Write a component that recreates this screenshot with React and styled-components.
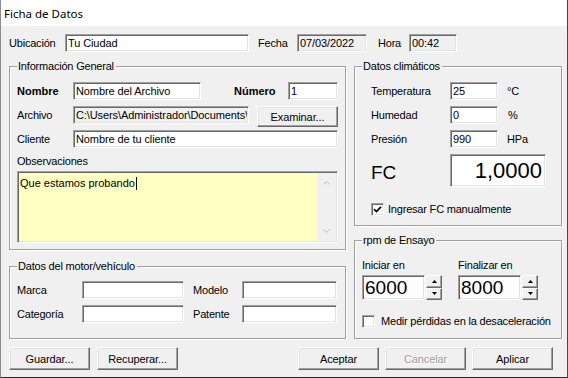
import React from 'react';
import styled, { createGlobalStyle } from 'styled-components';

const GlobalStyle = createGlobalStyle`
  html, body {
    margin: 0;
    padding: 0;
    background: #fff;
  }
  body {
    font-family: "Liberation Sans", Arial, sans-serif;
    font-size: 11px;
    color: #000;
  }
  * {
    box-sizing: border-box;
  }
`;

const Window = styled.div`
  width: 568px;
  height: 378px;
  display: flex;
  flex-direction: column;
  background: #f0f0f0;
  border-left: 1px solid #8c8c8c;
  border-right: 1px solid #4a4a24;
  border-bottom: 1px solid #2b2b2b;
`;

const TitleBar = styled.div`
  flex: none;
  height: 26px;
  display: flex;
  align-items: center;
  padding-left: 3px;
  background: #fff;
  font-family: "Noto Sans", "Liberation Sans", sans-serif;
  font-size: 11.5px;
`;

const Body = styled.div`
  flex: 1;
  display: flex;
  flex-direction: column;
  padding: 7px 6px 0 8px;
`;

const TopRow = styled.div`
  display: flex;
  align-items: center;
  height: 19px;
`;

const Label = styled.span`
  flex: none;
  width: ${(p) => (p.$w ? `${p.$w}px` : 'auto')};
  margin-left: ${(p) => (p.$auto ? 'auto' : `${p.$ml || 0}px`)};
  font-weight: ${(p) => (p.$bold ? 700 : 400)};
  letter-spacing: ${(p) => (p.$bold ? '0' : '-0.2px')};
  white-space: nowrap;
`;

const BigLabel = styled.span`
  flex: none;
  width: ${(p) => p.$w}px;
  font-family: "Liberation Sans", Arial, sans-serif;
  font-size: 19px;
  padding-top: 4px;
`;

const Field = styled.input`
  flex: none;
  width: ${(p) => p.$w}px;
  height: ${(p) => p.$h || 18}px;
  margin: 0;
  margin-left: ${(p) => p.$ml || 0}px;
  padding: 0 ${(p) => (p.$align === 'right' ? 3 : 1)}px 0 2px;
  font-family: "Liberation Sans", Arial, sans-serif;
  font-size: ${(p) => p.$fs || 11}px;
  letter-spacing: ${(p) => (p.$fs ? '0' : '-0.1px')};
  text-align: ${(p) => p.$align || 'left'};
  color: #000;
  background: ${(p) => (p.$ro ? '#f0f0f0' : '#fff')};
  border: 1px solid;
  border-color: #a0a0a0 #fff #fff #a0a0a0;
  box-shadow: inset 1px 1px 0 #696969, inset -1px -1px 0 #e3e3e3;
  outline: none;
`;

const Main = styled.div`
  display: flex;
  gap: 8px;
  margin-top: 14px;
`;

const Column = styled.div`
  flex: none;
  width: ${(p) => p.$w}px;
  display: flex;
  flex-direction: column;
  gap: ${(p) => p.$gap}px;
`;

const Group = styled.div`
  position: relative;
  flex: none;
  height: ${(p) => p.$h}px;
  display: flex;
  flex-direction: column;
  padding: ${(p) => p.$pad};
  border: 1px solid #a0a0a0;
  box-shadow: inset 1px 1px 0 #fff, 1px 1px 0 #fff;
`;

const Caption = styled.span`
  position: absolute;
  top: -8px;
  left: 7px;
  padding: 0 2px 0 1px;
  line-height: 14px;
  letter-spacing: -0.2px;
  background: #f0f0f0;
`;

const Row = styled.div`
  display: flex;
  align-items: center;
  height: ${(p) => p.$h || 24}px;
  margin-top: ${(p) => p.$mt || 0}px;
`;

const Button = styled.button`
  flex: none;
  width: ${(p) => p.$w || 81}px;
  height: ${(p) => p.$h || 23}px;
  margin: 0;
  padding: 0;
  align-self: ${(p) => p.$self || 'auto'};
  margin-left: ${(p) => (p.$auto ? 'auto' : '0')};
  font-family: "Liberation Sans", Arial, sans-serif;
  font-size: 11px;
  letter-spacing: -0.1px;
  color: ${(p) => (p.disabled ? '#a0a0a0' : '#000')};
  text-shadow: ${(p) => (p.disabled ? '1px 1px 0 #fff' : 'none')};
  background: #f0f0f0;
  border: 1px solid;
  border-color: #fff #696969 #696969 #fff;
  box-shadow: inset -1px -1px 0 #a0a0a0, inset 1px 1px 0 #e3e3e3;
`;

const SectionLabel = styled.div`
  line-height: 14px;
  padding-top: 3px;
  margin-bottom: 3px;
  letter-spacing: -0.2px;
`;

const Memo = styled.div`
  display: flex;
  height: 72px;
  background: #ffffc4;
  border: 1px solid;
  border-color: #a0a0a0 #fff #fff #a0a0a0;
  box-shadow: inset 1px 1px 0 #696969, inset -1px -1px 0 #e3e3e3;
`;

const MemoText = styled.div`
  flex: 1;
  padding: 4px 2px;
  line-height: 14px;
  font-size: 11px;
`;

const Caret = styled.span`
  display: inline-block;
  width: 1px;
  height: 13px;
  margin-left: 1px;
  vertical-align: -3px;
  background: #000;
`;

const ScrollBar = styled.div`
  flex: none;
  width: 19px;
  margin: 1px 1px 1px 0;
  display: flex;
  flex-direction: column;
  justify-content: space-between;
  align-items: center;
  padding: 8px 0;
  background: #f0f0f0;
`;

const CheckBox = styled.span`
  flex: none;
  width: 13px;
  height: 13px;
  display: flex;
  align-items: center;
  justify-content: center;
  background: #fff;
  border: 1px solid;
  border-color: #a0a0a0 #fff #fff #a0a0a0;
  box-shadow: inset 1px 1px 0 #696969, inset -1px -1px 0 #e3e3e3;
`;

const SpinRow = styled.div`
  display: flex;
  gap: 16px;
`;

const SpinCol = styled.div`
  display: flex;
  flex-direction: column;
`;

const Spin = styled.div`
  display: flex;
`;

const SpinBox = styled.div`
  flex: none;
  width: 16px;
  height: 25px;
  margin-left: 1px;
  display: flex;
  flex-direction: column;
`;

const SpinBtn = styled.div`
  flex: 1;
  display: flex;
  align-items: center;
  justify-content: center;
  background: #f0f0f0;
  border: 1px solid;
  border-color: #fff #696969 #696969 #fff;
  box-shadow: inset -1px -1px 0 #a0a0a0;
`;

const BottomBar = styled.div`
  display: flex;
  justify-content: space-between;
  margin-top: 8px;
  padding: 0 8px 0 0;
`;

const ButtonGroup = styled.div`
  display: flex;
  gap: ${(p) => p.$gap}px;
`;

const Chevron = ({ up }) => (
  <svg width="7" height="4" viewBox="0 0 7 4">
    <polyline
      points={up ? '0.5,3.5 3.5,0.5 6.5,3.5' : '0.5,0.5 3.5,3.5 6.5,0.5'}
      fill="none"
      stroke="#bdbdbd"
      strokeWidth="1"
    />
  </svg>
);

const Arrow = ({ up }) => (
  <svg width="5" height="3" viewBox="0 0 5 3">
    <polygon points={up ? '0,3 2.5,0 5,3' : '0,0 2.5,3 5,0'} fill="#000" />
  </svg>
);

const Check = ({ checked, label, gap = 4 }) => (
  <>
    <CheckBox>
      {checked && (
        <svg width="9" height="9" viewBox="0 0 9 9">
          <polyline points="1,4.2 3.4,6.6 8,1.8" fill="none" stroke="#000" strokeWidth="1.7" />
        </svg>
      )}
    </CheckBox>
    <Label $ml={gap}>{label}</Label>
  </>
);

const SpinField = ({ label, value }) => (
  <SpinCol>
    <SectionLabel style={{ paddingTop: 0 }}>{label}</SectionLabel>
    <Spin>
      <Field $w={63} $h={25} $fs={19} readOnly value={value} />
      <SpinBox>
        <SpinBtn>
          <Arrow up />
        </SpinBtn>
        <SpinBtn>
          <Arrow />
        </SpinBtn>
      </SpinBox>
    </Spin>
  </SpinCol>
);

export default function App() {
  return (
    <>
      <GlobalStyle />
      <Window>
        <TitleBar>Ficha de Datos</TitleBar>
        <Body>
          <TopRow>
            <Label $w={56}>Ubicación</Label>
            <Field $w={184} readOnly value="Tu Ciudad" />
            <Label $ml={9} $w={39}>Fecha</Label>
            <Field $w={70} $ro readOnly value="07/03/2022" />
            <Label $ml={11} $w={31}>Hora</Label>
            <Field $w={48} $ro readOnly value="00:42" />
          </TopRow>

          <Main>
            <Column $w={337} $gap={16}>
              <Group $h={184} $pad="12px 7px 0 7px">
                <Caption>Información General</Caption>
                <Row>
                  <Label $bold $w={56}>Nombre</Label>
                  <Field $w={128} readOnly value="Nombre del Archivo" />
                  <Label $bold $auto $w={54}>Número</Label>
                  <Field $w={50} readOnly value="1" />
                </Row>
                <Row>
                  <Label $w={56}>Archivo</Label>
                  <Field
                    $w={176}
                    $ro
                    readOnly
                    value={'C:\\Users\\Administrador\\Documents\\Fichas'}
                  />
                  <Button $auto $h={21} $self="flex-end">Examinar...</Button>
                </Row>
                <Row>
                  <Label $w={56}>Cliente</Label>
                  <Field $w={265} readOnly value="Nombre de tu cliente" />
                </Row>
                <SectionLabel>Observaciones</SectionLabel>
                <Memo>
                  <MemoText>
                    Que estamos probando
                    <Caret />
                  </MemoText>
                  <ScrollBar>
                    <Chevron up />
                    <Chevron />
                  </ScrollBar>
                </Memo>
              </Group>

              <Group $h={73} $pad="11px 7px 0 7px">
                <Caption>Datos del motor/vehículo</Caption>
                <Row>
                  <Label $w={65}>Marca</Label>
                  <Field $w={102} readOnly value="" />
                  <Label $ml={9} $w={49}>Modelo</Label>
                  <Field $w={95} readOnly value="" />
                </Row>
                <Row>
                  <Label $w={65}>Categoría</Label>
                  <Field $w={102} readOnly value="" />
                  <Label $ml={9} $w={49}>Patente</Label>
                  <Field $w={95} readOnly value="" />
                </Row>
              </Group>
            </Column>

            <Column $w={208} $gap={14}>
              <Group $h={160} $pad="12px 7px 0 16px">
                <Caption>Datos climáticos</Caption>
                <Row>
                  <Label $w={79}>Temperatura</Label>
                  <Field $w={48} readOnly value="25" />
                  <Label $ml={9}>°C</Label>
                </Row>
                <Row>
                  <Label $w={79}>Humedad</Label>
                  <Field $w={48} readOnly value="0" />
                  <Label $ml={10}>%</Label>
                </Row>
                <Row>
                  <Label $w={79}>Presión</Label>
                  <Field $w={48} readOnly value="990" />
                  <Label $ml={9}>HPa</Label>
                </Row>
                <Row $h={33} $mt={3}>
                  <BigLabel $w={79}>FC</BigLabel>
                  <Field $w={96} $h={33} $fs={22} $align="right" readOnly value="1,0000" />
                </Row>
                <Row $h={16} $mt={14}>
                  <Check checked label="Ingresar FC manualmente" />
                </Row>
              </Group>

              <Group $h={99} $pad="17px 7px 0 7px">
                <Caption>rpm de Ensayo</Caption>
                <SpinRow>
                  <SpinField label="Iniciar en" value="6000" />
                  <SpinField label="Finalizar en" value="8000" />
                </SpinRow>
                <Row $h={16} $mt={13}>
                  <Check label="Medir pérdidas en la desaceleración" gap={6} />
                </Row>
              </Group>
            </Column>
          </Main>

          <BottomBar>
            <ButtonGroup $gap={7}>
              <Button>Guardar...</Button>
              <Button>Recuperar...</Button>
            </ButtonGroup>
            <ButtonGroup $gap={6}>
              <Button>Aceptar</Button>
              <Button disabled>Cancelar</Button>
              <Button>Aplicar</Button>
            </ButtonGroup>
          </BottomBar>
        </Body>
      </Window>
    </>
  );
}
